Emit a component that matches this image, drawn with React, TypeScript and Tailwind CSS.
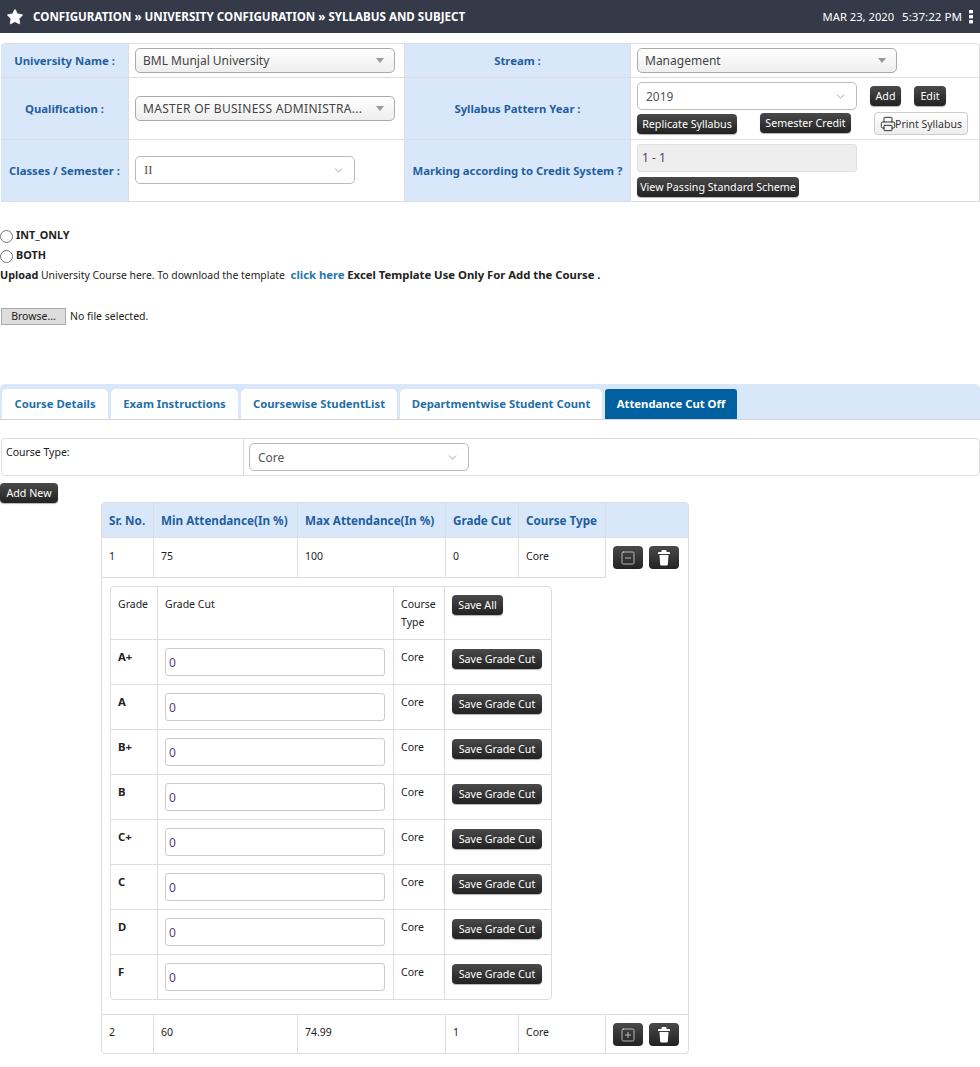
import { Star, ChevronDown, Printer, SquareMinus, SquarePlus } from 'lucide-react'
import type { ReactNode } from 'react'

const grades = ['A+', 'A', 'B+', 'B', 'C+', 'C', 'D', 'F']
const labelCell = 'bg-[#d9e7fb] border-b border-r border-[#dddddd] text-center text-[11.3px] font-bold text-[#1f5f9f]'
const valueCell = 'border-b border-r border-[#dddddd] px-[6px] align-top'
const headCell = 'pl-[7px] border-r border-[#dddddd] text-[11.7px]'
const topCell = 'border-y border-r border-[#dddddd] pl-[7px] align-top pt-[9px]'
const lastCell = 'border-r border-[#dddddd] pl-[7px] pt-[8px] align-top'
const gradeHead = 'border-r border-[#dddddd] pl-[7px] pt-[8px] align-top'
const gradeCell = 'border-t border-r border-[#dddddd] pl-[7px] pt-[8px] align-top'

function DarkBtn({ children, className = '' }: { children: ReactNode; className?: string }) {
  return (
    <button className={`inline-flex h-[20px] items-center justify-center whitespace-nowrap rounded-[4px] bg-gradient-to-b from-[#4a4a4a] to-[#222222] text-[10.7px] text-white shadow-[0_1px_1px_rgba(0,0,0,0.3)] ${className}`}>
      {children}
    </button>
  )
}

function FancySelect({ text, textClass = '' }: { text: string; textClass?: string }) {
  return (
    <div className="flex h-[25px] w-[260px] items-center justify-between rounded-[5px] border border-[#aaaaaa] bg-gradient-to-b from-white to-[#eeeeee] pl-[7px] pr-[10px] text-[12px] text-[#444444]">
      <span className={'pt-[1px] ' + textClass}>{text}</span>
      <span className="h-0 w-0 border-x-[4px] border-t-[5px] border-x-transparent border-t-[#999999]" />
    </div>
  )
}

function PlainSelect({ text, width, serif = false }: { text: string; width: string; serif?: boolean }) {
  return (
    <div className={`flex h-[28px] items-center justify-between rounded-[5px] border border-[#bbbbbb] bg-white pl-[8px] pr-[9px] text-[12px] text-[#555555] ${width}`}>
      <span className={serif ? "font-['Liberation_Serif',serif] text-[13px]" : 'pt-[1px]'}>{text}</span>
      <ChevronDown size={13} strokeWidth={1} className="text-[#555555]" />
    </div>
  )
}

function IconBtn({ children }: { children: ReactNode }) {
  return (
    <button className="flex h-[23px] w-[30px] items-center justify-center rounded-[4px] bg-gradient-to-b from-[#4a4a4a] to-[#222222] text-white">
      {children}
    </button>
  )
}

function TrashIcon() {
  return (
    <svg width="12" height="16" viewBox="0 0 12 16" fill="white">
      <path d="M4.5 0h3a1 1 0 0 1 1 1v1H11a1 1 0 0 1 1 1v1H0V3a1 1 0 0 1 1-1h2.5V1a1 1 0 0 1 1-1z" />
      <path d="M1.5 5h9l-.7 9.5a1 1 0 0 1-1 1H3.2a1 1 0 0 1-1-1z" />
    </svg>
  )
}

function DotsIcon() {
  return (
    <svg width="4" height="14" viewBox="0 0 4 14" fill="white">
      <rect width="4" height="3.4" y="0" />
      <rect width="4" height="3.4" y="5" />
      <rect width="4" height="3.4" y="10" />
    </svg>
  )
}

export default function App() {
  return (
    <div className="relative h-[1067px] w-[980px] overflow-hidden bg-white font-['Noto_Sans',sans-serif] text-[10.5px] leading-[18px] text-[#222222]">
      <header className="flex h-[33px] items-center bg-[#343a48] pl-[6px] pr-[7px] text-white">
        <Star size={18} fill="white" strokeWidth={1} />
        <span className="ml-[9px] text-[11.6px] font-bold">CONFIGURATION » UNIVERSITY CONFIGURATION » SYLLABUS AND SUBJECT</span>
        <span className="ml-auto text-[11.2px]">MAR 23, 2020</span>
        <span className="ml-[8px] text-[11.6px]">5:37:22 PM</span>
        <span className="ml-[7px]"><DotsIcon /></span>
      </header>

      <table className="ml-[1px] mt-[10px] w-[979px] table-fixed border-separate border-spacing-0 rounded-[5px] border-t border-[#dddddd]">
        <colgroup>
          <col className="w-[128px]" />
          <col className="w-[276px]" />
          <col className="w-[226px]" />
          <col />
        </colgroup>
        <tbody>
          <tr className="h-[34px]">
            <td className={labelCell}>University Name :</td>
            <td className={valueCell + ' pt-[4px]'}><FancySelect text="BML Munjal University" /></td>
            <td className={labelCell}>Stream :</td>
            <td className={valueCell + ' pt-[4px]'}><FancySelect text="Management" /></td>
          </tr>
          <tr className="h-[62px]">
            <td className={labelCell}>Qualification :</td>
            <td className={valueCell + ' pt-[18px]'}><FancySelect text="MASTER OF BUSINESS ADMINISTRA..." textClass="tracking-[0.3px]" /></td>
            <td className={labelCell}>Syllabus Pattern Year :</td>
            <td className={valueCell + ' pt-[4px]'}>
              <div className="flex items-center">
                <PlainSelect text="2019" width="w-[220px]" />
                <DarkBtn className="ml-[13px] w-[31px]">Add</DarkBtn>
                <DarkBtn className="ml-[13px] w-[32px]">Edit</DarkBtn>
              </div>
              <div className="mt-[3px] flex items-start">
                <DarkBtn className="mt-[1px] w-[100px]">Replicate Syllabus</DarkBtn>
                <DarkBtn className="ml-[23px] w-[91px]">Semester Credit</DarkBtn>
                <button className="-mt-px ml-[23px] flex h-[23px] w-[94px] items-center justify-center rounded-[4px] border border-[#cccccc] bg-gradient-to-b from-white to-[#eeeeee] text-[#333333]">
                  <Printer size={16} strokeWidth={1.5} className="-mr-px" />
                  Print Syllabus
                </button>
              </div>
            </td>
          </tr>
          <tr className="h-[62px]">
            <td className={labelCell}>Classes / Semester :</td>
            <td className={valueCell + ' pt-[16px]'}><PlainSelect text="II" width="w-[220px]" serif /></td>
            <td className={labelCell}>Marking according to Credit System ?</td>
            <td className={valueCell + ' pt-[4px]'}>
              <div className="flex h-[28px] w-[220px] items-center rounded-[3px] border border-[#e0e0e0] bg-[#eeeeee] pl-[4px] text-[12px] text-[#5d3a7a]">1 - 1</div>
              <DarkBtn className="mt-[5px] w-[162px]">View Passing Standard Scheme</DarkBtn>
            </td>
          </tr>
        </tbody>
      </table>

      <div className="mt-[23px] flex h-[20px] items-center text-[10.8px] font-bold">
        <span className="mt-[2px] h-[13px] w-[13px] rounded-full border border-[#777777]" />
        <span className="ml-[3px]">INT_ONLY</span>
      </div>
      <div className="flex h-[20px] items-center text-[10.8px] font-bold">
        <span className="mt-[2px] h-[13px] w-[13px] rounded-full border border-[#777777]" />
        <span className="ml-[3px]">BOTH</span>
      </div>
      <p className="h-[20px] text-[10.4px] leading-[20px]">
        <b className="text-[10.8px]">Upload</b> University Course here. To download the template <a className="ml-[3px] text-[11.3px] font-bold text-[#1f77b4]">click here</a> <b className="text-[11.3px]">Excel Template Use Only For Add the Course .</b>
      </p>

      <div className="mt-[22px] flex items-center">
        <button className="ml-[1px] h-[17px] w-[65px] border border-[#aaaaaa] bg-[#dddddd] leading-[15px]">Browse...</button>
        <span className="ml-[4px]">No file selected.</span>
      </div>

      <nav className="mt-[59px] flex h-[36px] items-end gap-[3px] rounded-t-[5px] border-b border-[#d5d5d5] bg-[#d9e7fb] pl-[2px] text-[11.3px] font-bold text-[#1f6fa8]">
        <a className="flex h-[30px] w-[106px] items-center justify-center rounded-t-[5px] bg-white">Course Details</a>
        <a className="flex h-[30px] w-[127px] items-center justify-center rounded-t-[5px] bg-white">Exam Instructions</a>
        <a className="flex h-[30px] w-[156px] items-center justify-center rounded-t-[5px] bg-white">Coursewise StudentList</a>
        <a className="flex h-[30px] w-[202px] items-center justify-center rounded-t-[5px] bg-white">Departmentwise Student Count</a>
        <a className="flex h-[30px] w-[132px] items-center justify-center rounded-t-[3px] bg-[#0060a0] text-white">Attendance Cut Off</a>
      </nav>

      <div className="ml-[1px] mt-[18px] flex h-[38px] rounded-[4px] border border-[#dddddd]">
        <div className="w-[242px] border-r border-[#dddddd] pl-[4px] pt-[4px]">Course Type:</div>
        <div className="pl-[5px] pt-[4px]"><PlainSelect text="Core" width="w-[220px]" /></div>
      </div>

      <DarkBtn className="-mb-px mt-[7px] flex h-[19px] w-[58px]">Add New</DarkBtn>

      <table className="ml-[101px] w-[588px] table-fixed border-separate border-spacing-0 rounded-[4px] border border-[#dddddd]">
        <colgroup>
          <col className="w-[52px]" />
          <col className="w-[144px]" />
          <col className="w-[148px]" />
          <col className="w-[73px]" />
          <col className="w-[87px]" />
          <col />
        </colgroup>
        <thead>
          <tr className="h-[34px] bg-[#d9e7fb] text-left font-bold text-[#1f5f9f]">
            <th className={headCell}>Sr. No.</th>
            <th className={headCell}>Min Attendance(In %)</th>
            <th className={headCell}>Max Attendance(In %)</th>
            <th className={headCell}>Grade Cut</th>
            <th className={headCell}>Course Type</th>
            <th />
          </tr>
        </thead>
        <tbody>
          <tr className="h-[41px]">
            <td className={topCell}>1</td>
            <td className={topCell}>75</td>
            <td className={topCell}>100</td>
            <td className={topCell}>0</td>
            <td className={topCell}>Core</td>
            <td className="border-t border-[#dddddd] align-top pl-[7px] pt-[8px]">
              <div className="flex gap-[6px]">
                <IconBtn><SquareMinus size={16} strokeWidth={1.3} className="text-[#cccccc]" /></IconBtn>
                <IconBtn><TrashIcon /></IconBtn>
              </div>
            </td>
          </tr>
          <tr className="h-[437px]">
            <td colSpan={6} className="border-b border-[#dddddd] pl-[8px] pt-[8px] align-top">
              <table className="w-[442px] table-fixed border-separate border-spacing-0 rounded-[4px] border border-[#dddddd]">
                <colgroup>
                  <col className="w-[47px]" />
                  <col className="w-[236px]" />
                  <col className="w-[51px]" />
                  <col />
                </colgroup>
                <tbody>
                  <tr className="h-[52px]">
                    <td className={gradeHead}>Grade</td>
                    <td className={gradeHead}>Grade Cut</td>
                    <td className={gradeHead}>Course Type</td>
                    <td className="pl-[7px] pt-[8px] align-top"><DarkBtn className="w-[51px]">Save All</DarkBtn></td>
                  </tr>
                  {grades.map(grade => (
                    <tr key={grade} className="h-[45px]">
                      <td className={gradeCell + ' text-[11.3px] font-bold'}>{grade}</td>
                      <td className={gradeCell}>
                        <div className="flex h-[28px] w-[220px] items-center rounded-[3px] border border-[#cccccc] pl-[3px] pt-[1px] text-[12px] text-[#5d3a7a]">0</div>
                      </td>
                      <td className={gradeCell}>Core</td>
                      <td className="border-t border-[#dddddd] pl-[7px] pt-[9px] align-top"><DarkBtn className="w-[90px]">Save Grade Cut</DarkBtn></td>
                    </tr>
                  ))}
                </tbody>
              </table>
            </td>
          </tr>
          <tr className="h-[38px]">
            <td className={lastCell}>2</td>
            <td className={lastCell}>60</td>
            <td className={lastCell}>74.99</td>
            <td className={lastCell}>1</td>
            <td className={lastCell}>Core</td>
            <td className="align-top pl-[7px] pt-[8px]">
              <div className="flex gap-[6px]">
                <IconBtn><SquarePlus size={16} strokeWidth={1.3} className="text-[#cccccc]" /></IconBtn>
                <IconBtn><TrashIcon /></IconBtn>
              </div>
            </td>
          </tr>
        </tbody>
      </table>
    </div>
  )
}
